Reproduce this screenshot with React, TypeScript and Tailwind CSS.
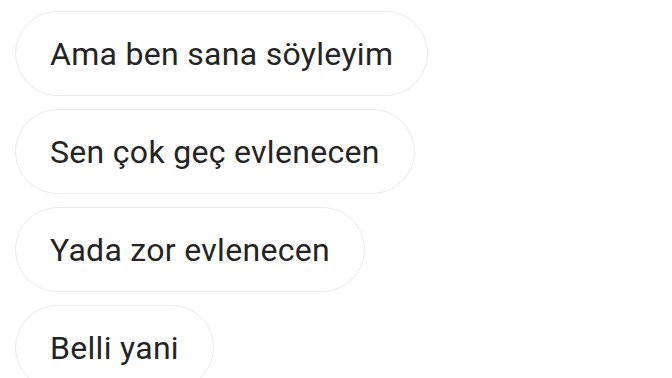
const messages = [
  "Ama ben sana söyleyim",
  "Sen çok geç evlenecen",
  "Yada zor evlenecen",
  "Belli yani",
];

function App() {
  return (
    <div className="w-[672px] h-[378px] overflow-hidden bg-white font-['Roboto',sans-serif]">
      <div className="flex flex-col items-start gap-[13px] pl-[15px] pt-[11px]">
        {messages.map((m) => (
          <div
            key={m}
            className="h-[85px] shrink-0 flex items-center px-[34px] rounded-full border border-[#e9e9e9] bg-white text-[32px] tracking-[0.3px] text-[#242424] leading-none"
          >
            {m}
          </div>
        ))}
      </div>
    </div>
  );
}

export default App;
